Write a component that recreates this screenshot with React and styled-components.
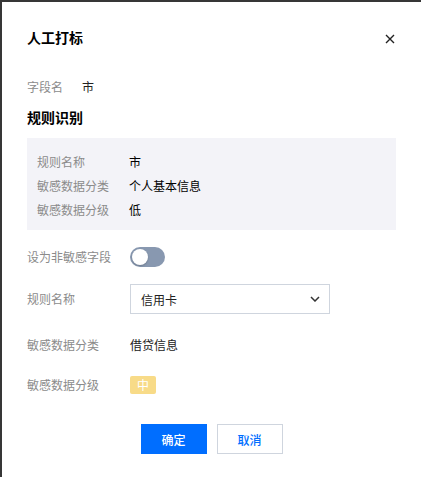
import React from "react";
import styled, { createGlobalStyle } from "styled-components";

const Global = createGlobalStyle`
  html, body { margin: 0; padding: 0; background: #3a3a3a; }
  body { font-family: "Noto Sans CJK SC", "Noto Sans", sans-serif; -webkit-font-smoothing: antialiased; }
  * { box-sizing: border-box; }
`;

const Backdrop = styled.div`
  width: 421px;
  height: 477px;
  padding: 2px 0 0 2px;
  background: #363636;
  overflow: hidden;
`;

const Dialog = styled.div`
  height: 100%;
  background: #fff;
  padding: 24px 25px 0 25px;
  display: flex;
  flex-direction: column;
`;

const Header = styled.div`
  display: flex;
  align-items: center;
  justify-content: space-between;
  height: 22px;
`;

const Title = styled.h2`
  margin: 0;
  font-size: 14px;
  line-height: 22px;
  font-weight: 700;
  color: #000;
`;

const Close = styled.button`
  width: 16px;
  height: 16px;
  margin: 3px -2px 0 0;
  padding: 0;
  border: 0;
  background: none;
  display: flex;
  align-items: center;
  justify-content: center;
  cursor: pointer;
`;

const Row = styled.div`
  display: flex;
  align-items: center;
  margin-top: ${(p) => p.$mt || 0}px;
  min-height: ${(p) => p.$h || 22}px;
`;

const Label = styled.span`
  width: ${(p) => p.$w || 103}px;
  flex-shrink: 0;
  font-size: 12px;
  line-height: 22px;
  color: #8b8b8b;
`;

const Value = styled.span`
  font-size: 12px;
  line-height: 22px;
  color: ${(p) => p.$color || "#222"};
`;

const SectionTitle = styled.h3`
  margin: 8px 0 0;
  font-size: 14px;
  line-height: 22px;
  font-weight: 700;
  color: #000;
`;

const Panel = styled.div`
  margin-top: 10px;
  background: #f3f3f8;
  padding: 12px 10px 8px;
  display: flex;
  flex-direction: column;
`;

const PanelRow = styled.div`
  display: flex;
  align-items: center;
  height: 24px;
`;

const Switch = styled.span`
  width: 35px;
  height: 20px;
  border-radius: 10px;
  background: #8898b0;
  display: flex;
  align-items: center;
  padding-left: 2px;
`;

const Knob = styled.span`
  width: 16px;
  height: 16px;
  border-radius: 50%;
  background: #fff;
  box-shadow: 0 1px 2px rgba(0, 0, 0, 0.2);
`;

const Select = styled.div`
  width: 200px;
  height: 30px;
  border: 1px solid #cfd5de;
  display: flex;
  align-items: center;
  justify-content: space-between;
  padding: 0 9px 0 10px;
  font-size: 12px;
  color: #222;
`;

const Tag = styled.span`
  width: 26px;
  height: 18px;
  border-radius: 2px;
  background: #f8db88;
  color: #fff;
  font-size: 12px;
  line-height: 18px;
  text-align: center;
`;

const Footer = styled.div`
  margin-top: 28px;
  display: flex;
  justify-content: center;
  gap: 10px;
`;

const Button = styled.button`
  width: 66px;
  height: 30px;
  font-family: inherit;
  font-size: 12px;
  font-weight: 500;
  border: 1px solid ${(p) => (p.$primary ? "#006eff" : "#cfd5de")};
  background: ${(p) => (p.$primary ? "#006eff" : "#fff")};
  color: ${(p) => (p.$primary ? "#fff" : "#006eff")};
  padding: 0;
  cursor: pointer;
`;

export default function App() {
  return (
    <>
      <Global />
      <Backdrop>
        <Dialog>
          <Header>
            <Title>人工打标</Title>
            <Close aria-label="close">
              <svg width="10" height="10" viewBox="0 0 10 10">
                <path d="M1 1L9 9M9 1L1 9" stroke="#222" strokeWidth="1.4" />
              </svg>
            </Close>
          </Header>
          <Row $mt={28}>
            <Label $w={55}>字段名</Label>
            <Value>市</Value>
          </Row>
          <SectionTitle>规则识别</SectionTitle>
          <Panel>
            <PanelRow>
              <Label $w={92}>规则名称</Label>
              <Value $color="#000">市</Value>
            </PanelRow>
            <PanelRow>
              <Label $w={92}>敏感数据分类</Label>
              <Value $color="#000">个人基本信息</Value>
            </PanelRow>
            <PanelRow>
              <Label $w={92}>敏感数据分级</Label>
              <Value $color="#000">低</Value>
            </PanelRow>
          </Panel>
          <Row $mt={16} $h={20}>
            <Label>设为非敏感字段</Label>
            <Switch>
              <Knob />
            </Switch>
          </Row>
          <Row $mt={16} $h={30}>
            <Label>规则名称</Label>
            <Select>
              <span>信用卡</span>
              <svg width="10" height="6" viewBox="0 0 10 6">
                <path d="M1 1L5 5L9 1" fill="none" stroke="#333" strokeWidth="1.5" />
              </svg>
            </Select>
          </Row>
          <Row $mt={20}>
            <Label>敏感数据分类</Label>
            <Value>借贷信息</Value>
          </Row>
          <Row $mt={18}>
            <Label>敏感数据分级</Label>
            <Tag>中</Tag>
          </Row>
          <Footer>
            <Button $primary>确定</Button>
            <Button>取消</Button>
          </Footer>
        </Dialog>
      </Backdrop>
    </>
  );
}
